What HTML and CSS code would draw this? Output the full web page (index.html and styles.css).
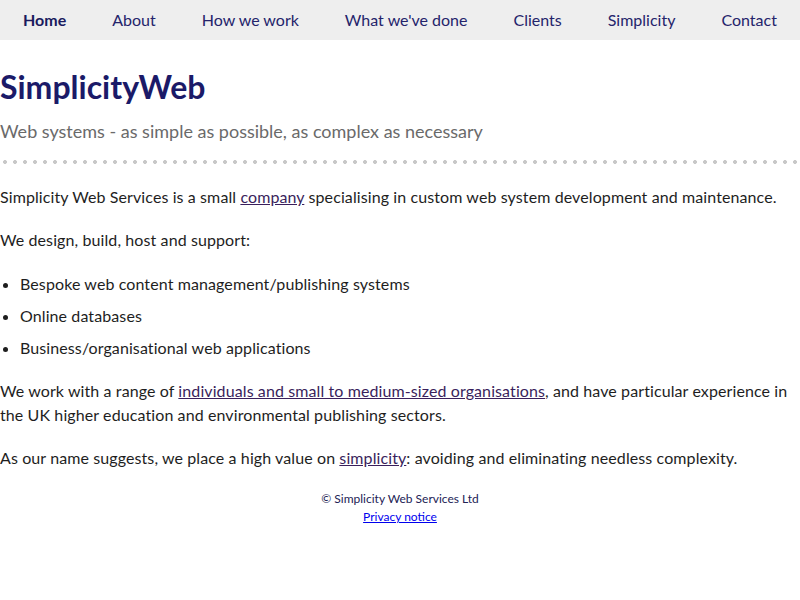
FILE: index.html
```html
<!DOCTYPE html>
<html lang="en">
<head>
<meta charset="utf-8">
<title>SimplicityWeb</title>
<link rel="stylesheet" href="styles.css">
</head>
<body>
<nav class="nav">
  <a class="nav-item current" href="#">Home</a>
  <a class="nav-item" href="#">About</a>
  <a class="nav-item" href="#">How we work</a>
  <a class="nav-item" href="#">What we've done</a>
  <a class="nav-item" href="#">Clients</a>
  <a class="nav-item" href="#">Simplicity</a>
  <a class="nav-item" href="#">Contact</a>
</nav>
<header class="masthead">
  <h1 class="title">SimplicityWeb</h1>
  <p class="tagline">Web systems - as simple as possible, as complex as necessary</p>
</header>
<div class="rule"></div>
<main class="content">
  <p>Simplicity Web Services is a small <a class="visited" href="#">company</a> specialising in custom web system development and maintenance.</p>
  <p>We design, build, host and support:</p>
  <ul class="list">
    <li>Bespoke web content management/publishing systems</li>
    <li>Online databases</li>
    <li>Business/organisational web applications</li>
  </ul>
  <p>We work with a range of <a class="visited" href="#">individuals and small to medium-sized organisations</a>, and have particular experience in the UK higher education and environmental publishing sectors.</p>
  <p>As our name suggests, we place a high value on <a class="visited" href="#">simplicity</a>: avoiding and eliminating needless complexity.</p>
</main>
<footer class="footer">
  <div>© Simplicity Web Services Ltd</div>
  <a class="footer-link" href="#">Privacy notice</a>
</footer>
</body>
</html>
```
FILE: styles.css
```css
body {
  margin: 0;
  font-family: Lato, "Noto Sans", sans-serif;
  color: #1e1e1e;
  background: #fff;
}
.nav {
  display: flex;
  justify-content: space-around;
  align-items: center;
  height: 39px;
  padding-bottom: 1px;
  background: #eeeeee;
}
.nav-item {
  font-size: 16px;
  color: #24246b;
  text-decoration: none;
}
.nav-item.current {
  font-weight: bold;
  color: #1a1a5e;
}
.masthead {
  padding-top: 27px;
}
.title {
  margin: 0;
  font-size: 32px;
  line-height: 40px;
  font-weight: bold;
  color: #1b1a68;
}
.tagline {
  margin: 12px 0 0;
  font-size: 18px;
  line-height: 24px;
  color: #6a6a6a;
}
.rule {
  margin-top: 17px;
  height: 4px;
  background-image: radial-gradient(circle, #c8c8c8 1.8px, transparent 2.2px);
  background-size: 10px 4px;
  background-repeat: repeat-x;
  background-position: 0 0;
}
.content {
  padding-top: 2px;
  font-size: 16px;
  line-height: 24px;
  letter-spacing: 0.1px;
}
.content p {
  margin: 19px 0;
}
.list {
  margin: 20px 0 19px;
  padding-left: 20px;
}
.list li {
  margin: 8px 0;
}
.visited {
  color: #3a1f5c;
}
.footer {
  text-align: center;
  font-size: 12px;
  line-height: 18px;
  color: #222255;
  margin-top: 20px;
}
.footer-link {
  color: #0000ee;
}
```
